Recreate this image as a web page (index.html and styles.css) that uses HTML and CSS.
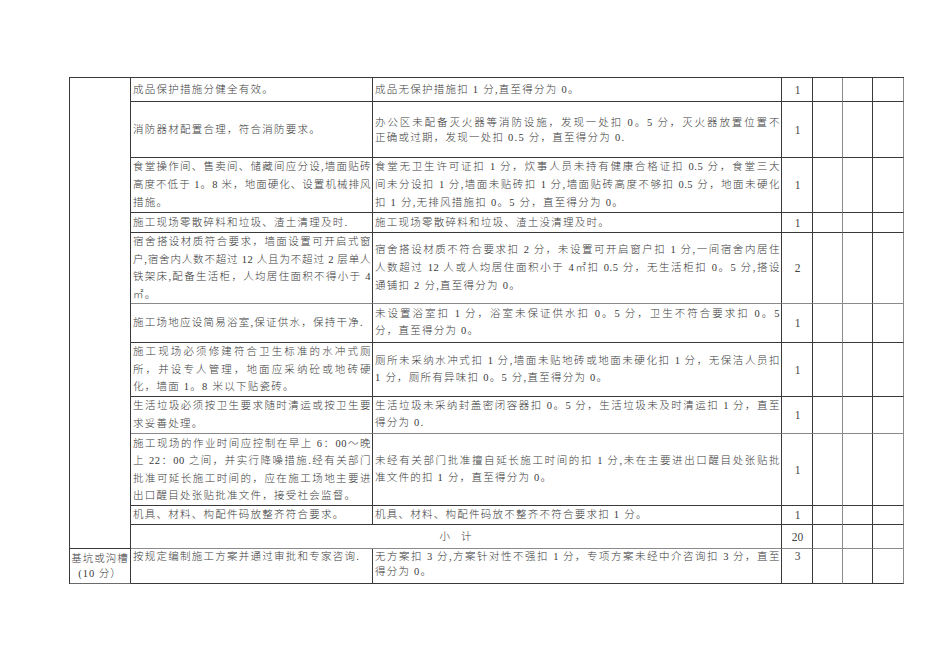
FILE: index.html
```html
<!DOCTYPE html>
<html lang="zh-CN">
<head>
<meta charset="utf-8">
<title>检查评分表</title>
<link rel="stylesheet" href="styles.css">
</head>
<body>
<div class="page">
<table class="grid">
<colgroup>
<col class="c1"><col class="c2"><col class="c3"><col class="c4"><col class="c5"><col class="c6"><col class="c7">
</colgroup>
<tbody>
<tr class="h24">
  <td class="cat" rowspan="11"></td>
  <td><div class="ln">成品保护措施分健全有效。</div></td>
  <td><div class="ln">成品无保护措施扣 1 分,直至得分为 0。</div></td>
  <td class="num">1</td><td class="g"></td><td></td><td class="g"></td>
</tr>
<tr class="h56">
  <td><div class="ln">消防器材配置合理，符合消防要求。</div></td>
  <td class="lh15"><div class="j">办公区未配备灭火器等消防设施，发现一处扣 0。5 分，灭火器放置位置不</div><div class="ln">正确或过期，发现一处扣 0.5 分，直至得分为 0.</div></td>
  <td class="num">1</td><td class="g"></td><td></td><td class="g"></td>
</tr>
<tr class="h55">
  <td><div class="j">食堂操作间、售卖间、储藏间应分设,墙面贴砖</div><div class="j">高度不低于 1。8 米，地面硬化、设置机械排风</div><div class="ln">措施。</div></td>
  <td><div class="j">食堂无卫生许可证扣 1 分，炊事人员未持有健康合格证扣 0.5 分，食堂三大</div><div class="j">间未分设扣 1 分,墙面未贴砖扣 1 分,墙面贴砖高度不够扣 0.5 分，地面未硬化</div><div class="ln">扣 1 分,无排风措施扣 0。5 分，直至得分为 0。</div></td>
  <td class="num">1</td><td class="g"></td><td></td><td class="g"></td>
</tr>
<tr class="h20">
  <td><div class="ln">施工现场零散碎料和垃圾、渣土清理及时.</div></td>
  <td><div class="ln">施工现场零散碎料和垃圾、渣土没清理及时。</div></td>
  <td class="num">1</td><td class="g"></td><td></td><td class="g"></td>
</tr>
<tr class="h71 gb">
  <td class="lh175"><div class="j">宿舍搭设材质符合要求，墙面设置可开启式窗</div><div class="j">户,宿舍内人数不超过 12 人且为不超过 2 层单人</div><div class="j">铁架床,配备生活柜，人均居住面积不得小于 4</div><div class="ln">㎡。</div></td>
  <td><div class="j">宿舍搭设材质不符合要求扣 2 分，未设置可开启窗户扣 1 分,一间宿舍内居住</div><div class="j">人数超过 12 人或人均居住面积小于 4㎡扣 0.5 分，无生活柜扣 0。5 分,搭设</div><div class="ln">通铺扣 2 分,直至得分为 0。</div></td>
  <td class="num">2</td><td class="g"></td><td></td><td class="g"></td>
</tr>
<tr class="h39">
  <td><div class="ln">施工场地应设简易浴室,保证供水，保持干净.</div></td>
  <td class="lh17"><div class="j">未设置浴室扣 1 分，浴室未保证供水扣 0。5 分，卫生不符合要求扣 0。5</div><div class="ln">分，直至得分为 0。</div></td>
  <td class="num">1</td><td class="g"></td><td></td><td class="g"></td>
</tr>
<tr class="h54">
  <td class="lh175"><div class="j">施工现场必须修建符合卫生标准的水冲式厕</div><div class="j">所，并设专人管理，地面应采纳砼或地砖硬</div><div class="ln">化，墙面 1。8 米以下贴瓷砖。</div></td>
  <td class="lh17"><div class="j">厕所未采纳水冲式扣 1 分,墙面未贴地砖或地面未硬化扣 1 分，无保洁人员扣</div><div class="ln">1 分，厕所有异味扣 0。5 分,直至得分为 0。</div></td>
  <td class="num">1</td><td class="g"></td><td></td><td class="g"></td>
</tr>
<tr class="h37 gb">
  <td><div class="j">生活垃圾必须按卫生要求随时清运或按卫生要</div><div class="ln">求妥善处理。</div></td>
  <td class="lh17"><div class="j">生活垃圾未采纳封盖密闭容器扣 0。5 分，生活垃圾未及时清运扣 1 分，直至</div><div class="ln">得分为 0.</div></td>
  <td class="num">1</td><td class="g"></td><td></td><td class="g"></td>
</tr>
<tr class="h72">
  <td class="lh175"><div class="j">施工现场的作业时间应控制在早上 6：00～晚</div><div class="j">上 22：00 之间，并实行降噪措施.经有关部门</div><div class="j">批准可延长施工时间的，应在施工场地主要进</div><div class="ln">出口醒目处张贴批准文件，接受社会监督。</div></td>
  <td class="lh17"><div class="j">未经有关部门批准擅自延长施工时间的扣 1 分,未在主要进出口醒目处张贴批</div><div class="ln">准文件的扣 1 分，直至得分为 0。</div></td>
  <td class="num">1</td><td class="g"></td><td></td><td class="g"></td>
</tr>
<tr class="h19">
  <td><div class="ln">机具、材料、构配件码放整齐符合要求。</div></td>
  <td><div class="ln">机具、材料、构配件码放不整齐不符合要求扣 1 分。</div></td>
  <td class="num">1</td><td class="g"></td><td></td><td class="g"></td>
</tr>
<tr class="h24 gb">
  <td class="sub" colspan="2">小&nbsp;&nbsp;计</td>
  <td class="num">20</td><td class="g"></td><td></td><td class="g"></td>
</tr>
<tr class="h35 top">
  <td class="cat2"><div>基坑或沟槽</div><div>(10 分）</div></td>
  <td><div class="ln">按规定编制施工方案并通过审批和专家咨询.</div></td>
  <td><div class="j">无方案扣 3 分,方案针对性不强扣 1 分，专项方案未经中介咨询扣 3 分，直至</div><div class="ln">得分为 0。</div></td>
  <td class="num">3</td><td class="g"></td><td></td><td class="g"></td>
</tr>
</tbody>
</table>
</div>
</body>
</html>
```

FILE: styles.css
```css
html, body {
  margin: 0;
  padding: 0;
  background: #ffffff;
}

body {
  font-family: "Liberation Serif", "Noto Sans CJK SC", serif;
  font-size: 10.5px;
  font-weight: 300;
  color: #3a3a3a;
}

.page {
  padding: 77px 0 0 69px;
}

.grid {
  border-collapse: separate;
  border-spacing: 0;
  table-layout: fixed;
  width: 835px;
  border-top: 1px solid #3a3a3a;
  border-left: 1px solid #3a3a3a;
}

.c1 { width: 61px; }
.c2 { width: 242px; }
.c3 { width: 409px; }
.c4 { width: 31px; }
.c5 { width: 30px; }
.c6 { width: 30px; }
.c7 { width: 31px; }

.grid td {
  box-sizing: border-box;
  border-right: 1px solid #3a3a3a;
  border-bottom: 1px solid #3a3a3a;
  padding: 0 1px 0 2px;
  vertical-align: middle;
  line-height: 18px;
  letter-spacing: 1.25px;
  overflow: hidden;
}

.grid td.g {
  border-right-color: #8a8a8a;
}

.grid tr.gb td {
  border-bottom-color: #8a8a8a;
}

.grid td.lh15 { line-height: 15px; }
.grid td.lh17 { line-height: 16.7px; }
.grid td.lh175 { line-height: 17.5px; }

.ln {
  white-space: nowrap;
}

.j {
  text-align: justify;
  text-align-last: justify;
  letter-spacing: 0.5px;
}

.grid td.num {
  text-align: center;
  letter-spacing: 0;
  font-size: 11.5px;
  color: #444;
}

.grid td.sub {
  text-align: center;
  letter-spacing: 2px;
}

.grid td.cat2 {
  text-align: center;
  line-height: 15px;
  padding: 0;
  letter-spacing: 1px;
  border-bottom-color: #6a6a6a;
}

.grid tr.top td {
  vertical-align: top;
  line-height: 15px;
  padding-top: 0;
}

.grid tr.top td.cat2 {
  vertical-align: middle;
}

.h19 { height: 19px; }
.h20 { height: 20px; }
.h24 { height: 24px; }
.h35 { height: 35px; }
.h37 { height: 37px; }
.h39 { height: 39px; }
.h54 { height: 54px; }
.h55 { height: 55px; }
.h56 { height: 56px; }
.h71 { height: 71px; }
.h72 { height: 72px; }
```
